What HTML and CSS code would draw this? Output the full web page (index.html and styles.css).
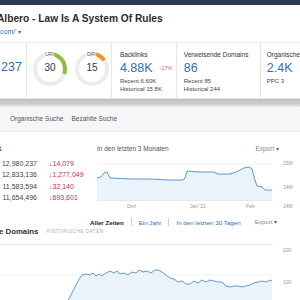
FILE: index.html
```html
<!DOCTYPE html>
<html lang="de">
<head>
<meta charset="utf-8">
<link rel="stylesheet" href="styles.css">
</head>
<body>
<div class="topbar"></div>
<header class="head">
  <h1 class="title">Albero - Law Is A System Of Rules</h1>
  <div class="url">com/' <span class="caret">▾</span></div>
</header>
<section class="cards">
  <div class="card c1"><div class="big">237</div></div>
  <div class="card c2">
    <svg class="ring" width="34" height="34" viewBox="0 0 34 34">
      <circle cx="17" cy="17" r="15" fill="none" stroke="#ececef" stroke-width="4"/>
      <circle cx="17" cy="17" r="15" fill="none" stroke="#8cbd3f" stroke-width="4" stroke-dasharray="28.3 95" transform="rotate(-90 17 17)"/>
      <text x="16" y="4" text-anchor="middle" class="dlabel">UR</text>
      <text x="17" y="18.5" text-anchor="middle" class="dval">30</text>
    </svg>
    <svg class="ring" width="34" height="34" viewBox="0 0 34 34">
      <circle cx="17" cy="17" r="15" fill="none" stroke="#ececef" stroke-width="4"/>
      <circle cx="17" cy="17" r="15" fill="none" stroke="#f7931e" stroke-width="4" stroke-dasharray="14.1 95" transform="rotate(-90 17 17)"/>
      <text x="16" y="4" text-anchor="middle" class="dlabel">DR</text>
      <text x="17" y="18.5" text-anchor="middle" class="dval">15</text>
    </svg>
  </div>
  <div class="card c3">
    <div class="label">Backlinks</div>
    <div class="bigrow"><span class="big">4.88K</span><span class="neg">-17%</span></div>
    <div class="sub">Recent 6.60K</div>
    <div class="sub">Historical 15.8K</div>
  </div>
  <div class="card c4">
    <div class="label">Verweisende Domains</div>
    <div class="bigrow"><span class="big">86</span></div>
    <div class="sub">Recent 85</div>
    <div class="sub">Historical 244</div>
  </div>
  <div class="card c5">
    <div class="label">Organische</div>
    <div class="bigrow"><span class="big">2.4K</span></div>
    <div class="sub">PPC 3</div>
  </div>
</section>
<div class="shadow"></div>
<nav class="tabs">
  <span class="tab">Organische Suche</span>
  <span class="tab">Bezahlte Suche</span>
</nav>
<section class="panel">
  <div class="pleft">
    <div class="ptitle">k</div>
    <table class="rank">
      <tr><td class="num">12,980,237</td><td class="down">↓14,079</td></tr>
      <tr><td class="num">12,833,136</td><td class="down">↓1,277,049</td></tr>
      <tr><td class="num">11,583,594</td><td class="down">↓32,140</td></tr>
      <tr><td class="num">11,654,496</td><td class="down">↓693,601</td></tr>
    </table>
  </div>
  <div class="pright">
    <div class="chead"><span class="period">In den letzten 3 Monaten</span><span class="export">Export <span class="caret">▾</span></span></div>
    <div class="chartrow">
      <svg class="chart" width="175" height="44" viewBox="0 0 175 44">
        <line x1="0" y1="7" x2="175" y2="7" stroke="#eef0f3"/>
        <line x1="0" y1="30" x2="175" y2="30" stroke="#eef0f3"/>
        <line x1="0" y1="43.5" x2="175" y2="43.5" stroke="#e6e8eb"/>
        <path d="M0 21 L4 20 L7 16 L10 15 L12 19 L13 21 L33 22 L53 22 L73 23 L86 23 L88 21 L90 14 L103 15 L116 15 L121 17 L133 17 L139 15 L147 11 L152 10 L155 12 L158 23 L160 29 L165 30 L168 33 L175 33 L175 43 L0 43 Z" fill="#eaf3fc"/>
        <path d="M0 21 L4 20 L7 16 L10 15 L12 19 L13 21 L33 22 L53 22 L73 23 L86 23 L88 21 L90 14 L103 15 L116 15 L121 17 L133 17 L139 15 L147 11 L152 10 L155 12 L158 23 L160 29 L165 30 L168 33 L175 33" fill="none" stroke="#5b9bd5" stroke-width="1"/>
      </svg>
      <div class="yaxis"><span>15M</span><span class="ym">14M</span><span class="yb">14M</span></div>
    </div>
    <div class="xaxis"><span class="x1">Dez</span><span class="x2">Jan '21</span><span class="x3">Feb</span></div>
  </div>
</section>
<section class="rd">
  <div class="rdtop">
    <span class="per active">Aller Zeiten</span><span class="sep"></span>
    <span class="per">Ein Jahr</span><span class="sep"></span>
    <span class="per">In den letzten 30 Tagen</span>
    <span class="export">Export <span class="caret">▾</span></span>
  </div>
  <div class="rdtitle">e Domains <span class="hist">HISTORISCHE DATEN</span></div>
  <div class="rdchartrow">
    <svg class="chart2" width="272" height="57" viewBox="0 0 272 57">
      <line x1="0" y1="30" x2="272" y2="30" stroke="#f0f1f3"/>
      <path d="M67 57 L70 52 L74 44 L78 36 L82 30 L86 29 L90 30 L93 28 L96 31 L99 29 L102 31 L106 28 L110 26 L114 28 L117 26 L120 29 L124 28 L128 30 L132 27 L136 28 L139 25 L143 27 L147 26 L151 28 L155 25 L158 25 L162 27 L166 30 L170 33 L174 34 L178 37 L182 36 L186 39 L190 39 L194 36 L198 38 L202 35 L206 37 L210 35 L214 36 L218 37 L222 37 L226 41 L230 42 L234 41 L238 41 L242 42 L246 41 L250 40 L254 38 L258 37 L262 36 L266 37 L270 35 L272 36 L272 57 Z" fill="#eaf3fc"/>
      <path d="M67 57 L70 52 L74 44 L78 36 L82 30 L86 29 L90 30 L93 28 L96 31 L99 29 L102 31 L106 28 L110 26 L114 28 L117 26 L120 29 L124 28 L128 30 L132 27 L136 28 L139 25 L143 27 L147 26 L151 28 L155 25 L158 25 L162 27 L166 30 L170 33 L174 34 L178 37 L182 36 L186 39 L190 39 L194 36 L198 38 L202 35 L206 37 L210 35 L214 36 L218 37 L222 37 L226 41 L230 42 L234 41 L238 41 L242 42 L246 41 L250 40 L254 38 L258 37 L262 36 L266 37 L270 35 L272 36" fill="none" stroke="#5b9bd5" stroke-width="1"/>
    </svg>
    <div class="yaxis2"><span>200</span><span class="y2b">100</span></div>
  </div>
</section>
</body>
</html>
```

FILE: styles.css
```css
html, body {
  margin: 0;
  padding: 0;
  background: #ffffff;
  width: 300px;
  height: 300px;
  overflow: hidden;
  font-family: "Liberation Sans", Arial, sans-serif;
  color: #333333;
}
.topbar {
  height: 5px;
  background: #2d3a56;
}
.head {
  height: 37px;
  padding-top: 7px;
  box-sizing: border-box;
}
.title {
  margin: 0 0 0 -3px;
  font-size: 10.2px;
  line-height: 14px;
  font-weight: bold;
  color: #2b2b2b;
  white-space: nowrap;
}
.url {
  margin-top: 2px;
  font-size: 7px;
  line-height: 8px;
  color: #2f6fba;
}
.caret {
  font-size: 6px;
  color: #666;
}
.url .caret { color: #2f6fba; }
.cards {
  display: flex;
  height: 55px;
  border-top: 1px solid #ececec;
  border-bottom: 1px solid #e4e4e4;
}
.card {
  border-right: 1px solid #e6e6e6;
  box-sizing: border-box;
}
.c1 { width: 28px; padding-top: 17px; }
.c1 .big { margin-left: 1px; }
.c2 { width: 88px; display: flex; gap: 8px; padding: 9px 0 0 6px; }
.c3 { width: 67px; padding: 8px 0 0 8px; }
.c4 { width: 87px; padding: 8px 0 0 7px; }
.c5 { flex: 1; border-right: 0; padding: 8px 0 0 6px; }
.ring { display: block; overflow: visible; }
.dlabel {
  font-family: "Liberation Sans", Arial, sans-serif;
  font-size: 5.5px;
  fill: #555;
  stroke: #ffffff;
  stroke-width: 2px;
  paint-order: stroke;
}
.dval { font-family: "Liberation Sans", Arial, sans-serif; font-size: 10px; fill: #333; }
.big {
  font-size: 12.5px;
  line-height: 14px;
  color: #2f6fba;
}
.label {
  font-size: 6.5px;
  line-height: 7px;
  color: #333;
  white-space: nowrap;
}
.bigrow { display: flex; align-items: center; gap: 7px; margin-top: 2px; height: 16px; }
.neg { font-size: 5.5px; color: #e0535e; }
.sub {
  font-size: 6px;
  line-height: 8px;
  color: #444;
  white-space: nowrap;
}
.bigrow + .sub { margin-top: 1px; }
.shadow {
  height: 8px;
  background: linear-gradient(#c0c0c0, #cdcdcd 60%, #ececec);
}
.tabs {
  height: 25px;
  background: #f6f6f8;
  border-top: 1px solid #fafafa;
  border-bottom: 1px solid #efeff1;
  display: flex;
  align-items: center;
  gap: 8px;
  padding: 0 0 3px 10px;
  box-sizing: border-box;
}
.tab { font-size: 6.5px; color: #555; }
.panel {
  display: flex;
  margin-top: 12px;
  height: 68px;
}
.pleft { width: 97px; }
.ptitle {
  font-size: 8px;
  font-weight: bold;
  line-height: 10px;
  margin-left: -3px;
}
.rank {
  border-collapse: collapse;
  margin-top: 4px;
}
.rank td {
  font-size: 7px;
  line-height: 11.4px;
  padding: 0;
}
.rank .num { width: 37px; text-align: right; color: #444; }
.rank .down { padding-left: 12px; color: #c8323e; }
.pright { flex: 1; }
.chead {
  display: flex;
  justify-content: space-between;
  width: 182px;
  font-size: 6.5px;
  line-height: 10px;
  height: 10px;
  color: #555;
}
.export { color: #888; }
.chartrow { display: flex; align-items: flex-start; margin-top: 3px; height: 44px; }
.chart { display: block; }
.yaxis {
  display: flex;
  flex-direction: column;
  font-size: 5px;
  line-height: 6px;
  color: #999;
  padding-left: 11px;
  padding-top: 3px;
}
.ym { margin-top: 18px; }
.yb { margin-top: 13px; }
.xaxis {
  display: flex;
  height: 10px;
  font-size: 5px;
  line-height: 6px;
  color: #999;
  padding-top: 2px;
  box-sizing: border-box;
}
.x1 { margin-left: 30px; }
.x2 { margin-left: 54px; }
.x3 { margin-left: 40px; }
.rd { margin-top: 5px; }
.rdtop {
  display: flex;
  align-items: center;
  padding-left: 90px;
  font-size: 6.2px;
  line-height: 9px;
  color: #2f6fba;
}
.per.active { color: #222; font-weight: bold; }
.sep { width: 1px; height: 8px; background: #ccc; margin: 0 7px; }
.rdtop .export { margin-left: 14px; }
.rdtitle {
  font-size: 7.8px;
  font-weight: bold;
  line-height: 10px;
  margin-left: -1px;
  padding-bottom: 7px;
  border-bottom: 1px solid #ececec;
  width: 274px;
}
.hist { font-size: 4.5px; color: #aaa; font-weight: normal; margin-left: 6px; letter-spacing: 0.6px; vertical-align: middle; }
.rdchartrow { display: flex; align-items: flex-start; height: 57px; }
.chart2 { display: block; }
.yaxis2 {
  display: flex;
  flex-direction: column;
  font-size: 5px;
  line-height: 6px;
  color: #999;
  padding-left: 11px;
  padding-top: 2px;
}
.y2b { margin-top: 26px; }
```
